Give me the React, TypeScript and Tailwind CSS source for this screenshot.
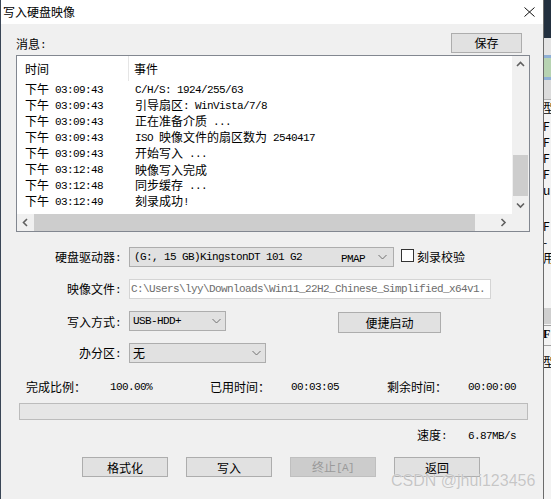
import React from 'react';

const CJK_RE = /([\u3000-\u9fff\uff00-\uffef]+)/;
const IS_CJK = /[\u3000-\u9fff\uff00-\uffef]/;

function M({ t }: { t: string }) {
  const parts = t.split(CJK_RE).filter((p) => p !== '');
  return (
    <>
      {parts.map((p, i) =>
        IS_CJK.test(p) ? (
          <span key={i} className="font-['Noto_Sans_CJK_SC',sans-serif] text-[12px]">
            {p}
          </span>
        ) : (
          <span key={i} className="font-['Liberation_Mono',monospace] text-[11px] tracking-[-0.6px] whitespace-pre align-[1px]">
            {p}
          </span>
        )
      )}
    </>
  );
}

function Chevron({ dir }: { dir: 'up' | 'down' | 'left' | 'right' }) {
  const d =
    dir === 'up'
      ? 'M1 5 L4.5 1.5 L8 5'
      : dir === 'down'
      ? 'M1 1.5 L4.5 5 L8 1.5'
      : dir === 'left'
      ? 'M5 1 L1.5 4.5 L5 8'
      : 'M1.5 1 L5 4.5 L1.5 8';
  const w = dir === 'up' || dir === 'down' ? 9 : 7;
  const h = dir === 'up' || dir === 'down' ? 7 : 9;
  return (
    <svg width={w} height={h} viewBox={`0 0 ${w} ${h}`}>
      <path d={d} fill="none" stroke="#606060" strokeWidth="1.6" />
    </svg>
  );
}

function SelArrow() {
  return (
    <svg width="9" height="6" viewBox="0 0 9 6">
      <path d="M0.5 1 L4.5 5 L8.5 1" fill="none" stroke="#707070" strokeWidth="1" />
    </svg>
  );
}

const rows: [string, string][] = [
  ['下午 03:09:43', 'C/H/S: 1924/255/63'],
  ['下午 03:09:43', '引导扇区: WinVista/7/8'],
  ['下午 03:09:43', '正在准备介质 ...'],
  ['下午 03:09:43', 'ISO 映像文件的扇区数为 2540417'],
  ['下午 03:09:43', '开始写入 ...'],
  ['下午 03:12:48', '映像写入完成'],
  ['下午 03:12:48', '同步缓存 ...'],
  ['下午 03:12:49', '刻录成功!'],
];

function Label({ t }: { t: string }) {
  return (
    <div className="w-[105px] shrink-0 text-right leading-[20px] text-black">
      <M t={t} />
    </div>
  );
}

function Btn({ t, w, disabled }: { t: string; w: string; disabled?: boolean }) {
  return (
    <div
      className={
        disabled
          ? `${w} h-[20px] flex items-center justify-center border border-[#bfbfbf] bg-[#cccccc] text-[#9a9a9a] leading-[18px]`
          : `${w} h-[20px] flex items-center justify-center border border-[#adadad] bg-[#e1e1e1] text-black leading-[18px]`
      }
    >
      <span>
        <M t={t} />
      </span>
    </div>
  );
}

export default function App() {
  return (
    <div className="w-[551px] h-[499px] flex overflow-hidden bg-[#f0f0f0] relative">
      {/* dialog */}
      <div className="w-[544px] h-[499px] flex flex-col border-l border-r border-l-[#3a4656] border-r-[#6b6b6b] shrink-0">
        {/* title bar */}
        <div className="h-[24px] bg-white flex items-center pl-[2px] pr-[8px] shrink-0">
          <span className="font-['Noto_Sans_CJK_SC',sans-serif] text-[12px] text-black leading-[16px]">写入硬盘映像</span>
          <div className="ml-auto flex items-center">
            <svg width="11" height="10" viewBox="0 0 11 10">
              <path d="M0.5 0.5 L10.5 9.5 M10.5 0.5 L0.5 9.5" stroke="#111" strokeWidth="1" />
            </svg>
          </div>
        </div>

        {/* body */}
        <div className="flex-1 bg-[#f0f0f0] pl-[15px] flex flex-col">
          {/* message row */}
          <div className="mt-[9px] w-[506px] h-[20px] flex items-end">
            <div className="leading-[16px] text-black">
              <M t="消息:" />
            </div>
            <div className="ml-auto w-[71px] h-[20px] flex items-center justify-center border border-[#adadad] bg-[#e1e1e1] text-black">
              <M t="保存" />
            </div>
          </div>

          {/* list box */}
          <div className="mt-[2px] w-[514px] h-[177px] border border-[#828790] bg-white flex flex-col">
            <div className="h-[158px] flex">
              <div className="flex-1 flex flex-col overflow-hidden">
                <div className="h-[25px] flex items-center shrink-0">
                  <div className="w-[111px] pl-[8px] text-black leading-[16px]">
                    <M t="时间" />
                  </div>
                  <div className="w-px h-[25px] bg-[#e5e5e5]" />
                  <div className="pl-[5px] text-black leading-[16px]">
                    <M t="事件" />
                  </div>
                </div>
                {rows.map(([a, b], i) => (
                  <div key={i} className="h-[16px] flex items-center shrink-0 text-black whitespace-nowrap">
                    <div className="w-[111px] pl-[8px] leading-[16px]">
                      <M t={a} />
                    </div>
                    <div className="pl-[7px] leading-[16px]">
                      <M t={b} />
                    </div>
                  </div>
                ))}
              </div>
              {/* vertical scrollbar */}
              <div className="w-[17px] h-[158px] bg-[#f0f0f0] flex flex-col items-center shrink-0">
                <div className="h-[17px] w-full flex items-center justify-center">
                  <Chevron dir="up" />
                </div>
                <div className="h-[82px]" />
                <div className="h-[41px] w-[15px] bg-[#cdcdcd]" />
                <div className="flex-1" />
                <div className="h-[17px] w-full flex items-center justify-center">
                  <Chevron dir="down" />
                </div>
              </div>
            </div>
            <div className="h-[17px] flex">
              <div className="flex-1 flex bg-[#f0f0f0]">
                <div className="w-[17px] h-full flex items-center justify-center">
                  <Chevron dir="left" />
                </div>
                <div className="w-[441px] h-full bg-[#cdcdcd]" />
                <div className="flex-1" />
                <div className="w-[17px] h-full flex items-center justify-center">
                  <Chevron dir="right" />
                </div>
              </div>
              <div className="w-[17px] h-full bg-[#f0f0f0]" />
            </div>
          </div>

          {/* drive row */}
          <div className="mt-[15px] h-[20px] flex items-center">
            <Label t="硬盘驱动器:" />
            <div className="ml-[8px] w-[265px] h-[20px] border border-[#adadad] bg-[#e1e1e1] flex items-center pl-[4px] pr-[4px] text-black whitespace-nowrap">
              <M t="(G:, 15 GB)KingstonDT 101 G2" />
              <span className="ml-[39px]">
                <M t="PMAP" />
              </span>
              <div className="ml-auto mr-[2px] flex items-center">
                <SelArrow />
              </div>
            </div>
            <div className="ml-[7px] w-[13px] h-[13px] border border-[#333333] bg-white mb-[3px]" />
            <div className="ml-[3px] text-black leading-[16px] mb-[1px]">
              <M t="刻录校验" />
            </div>
          </div>

          {/* image file row */}
          <div className="mt-[12px] h-[20px] flex items-center">
            <Label t="映像文件:" />
            <div className="ml-[8px] w-[362px] h-[20px] border border-[#d4d4d4] bg-white flex items-center pl-[1px] text-[#6d6d6d] whitespace-nowrap overflow-hidden">
              <M t="C:\Users\lyy\Downloads\Win11_22H2_Chinese_Simplified_x64v1." />
            </div>
          </div>

          {/* write mode row */}
          <div className="mt-[12px] h-[22px] flex items-start">
            <Label t="写入方式:" />
            <div className="ml-[8px] w-[97px] h-[20px] border border-[#adadad] bg-[#e1e1e1] flex items-center pl-[3px] pr-[4px] text-black">
              <M t="USB-HDD+" />
              <div className="ml-auto flex items-center">
                <SelArrow />
              </div>
            </div>
            <div className="ml-[112px] mt-[1px] w-[103px] h-[21px] border border-[#adadad] bg-[#e1e1e1] flex items-center justify-center text-black">
              <M t="便捷启动" />
            </div>
          </div>

          {/* partition row */}
          <div className="mt-[10px] h-[20px] flex items-center">
            <Label t="办分区:" />
            <div className="ml-[8px] w-[137px] h-[20px] border border-[#adadad] bg-[#e1e1e1] flex items-center pl-[3px] pr-[4px] text-black">
              <M t="无" />
              <div className="ml-auto flex items-center">
                <SelArrow />
              </div>
            </div>
          </div>

          {/* stats row */}
          <div className="mt-[15px] h-[16px] flex items-center pl-[10px] text-black whitespace-nowrap leading-[16px]">
            <div className="w-[84px]">
              <M t="完成比例：" />
            </div>
            <div className="w-[100px]">
              <M t="100.00%" />
            </div>
            <div className="w-[81px]">
              <M t="已用时间：" />
            </div>
            <div className="w-[96px]">
              <M t="00:03:05" />
            </div>
            <div className="w-[81px]">
              <M t="剩余时间：" />
            </div>
            <div>
              <M t="00:00:00" />
            </div>
          </div>

          {/* progress */}
          <div className="mt-[9px] ml-[3px] w-[509px] h-[17px] border border-[#bcbcbc] bg-[#e6e6e6]" />

          {/* speed */}
          <div className="mt-[7px] h-[16px] flex items-center ml-[401px] text-black whitespace-nowrap leading-[16px]">
            <div className="w-[51px]">
              <M t="速度:" />
            </div>
            <div>
              <M t="6.87MB/s" />
            </div>
          </div>

          {/* buttons */}
          <div className="mt-[14px] ml-[66px] flex gap-[18px]">
            <Btn t="格式化" w="w-[86px]" />
            <Btn t="写入" w="w-[86px]" />
            <Btn t="终止[A]" w="w-[86px]" disabled />
            <Btn t="返回" w="w-[86px]" />
          </div>
        </div>
      </div>

      {/* background window strip at right */}
      <div className="w-[7px] h-[499px] flex flex-col shrink-0 overflow-hidden bg-[#f3f3f3]">
        <div className="h-[38px] bg-[#23303f]" />
        <div className="h-[17px] bg-[#e4e4e4]" />
        <div className="h-[3px] bg-[#8fb0d6]" />
        <div className="h-[19px] bg-[#b7d3b2]" />
        <div className="h-[3px] bg-[#8fb0d6]" />
        <div className="h-[20px] bg-[#dcdcdc] border-b border-[#b0b0b0]" />
        <div className="flex flex-col text-black font-['Noto_Sans_CJK_SC',sans-serif] text-[12px] leading-[16px] whitespace-nowrap -ml-[1px]">
          <span>型</span>
          <span className="mt-[2px]">F</span>
          <span>F</span>
          <span>F</span>
          <span>F</span>
          <span>u</span>
          <span className="mt-[20px]">F</span>
          <span>-</span>
          <span>用</span>
        </div>
        <div className="mt-[42px] h-[16px] bg-[#cfcfcf]" />
        <div className="h-[2px] border-b border-[#a0a0a0]" />
        <div className="font-['Liberation_Serif',serif] text-[12px] font-bold text-black leading-[16px] -ml-[1px]">F</div>
        <div className="h-[4px] border-b border-[#a0a0a0]" />
        <div className="mt-[8px] text-[12px] text-black leading-[16px] font-['Noto_Sans_CJK_SC',sans-serif] -ml-[1px]">型</div>
      </div>

      {/* watermark */}
      <div className="absolute left-[391px] top-[472px] font-['Liberation_Sans',sans-serif] text-[16px] leading-[18px] text-[#c6c6c6] whitespace-nowrap [text-shadow:0_0_1px_#ffffff]">
        CSDN @jhui123456
      </div>
    </div>
  );
}
